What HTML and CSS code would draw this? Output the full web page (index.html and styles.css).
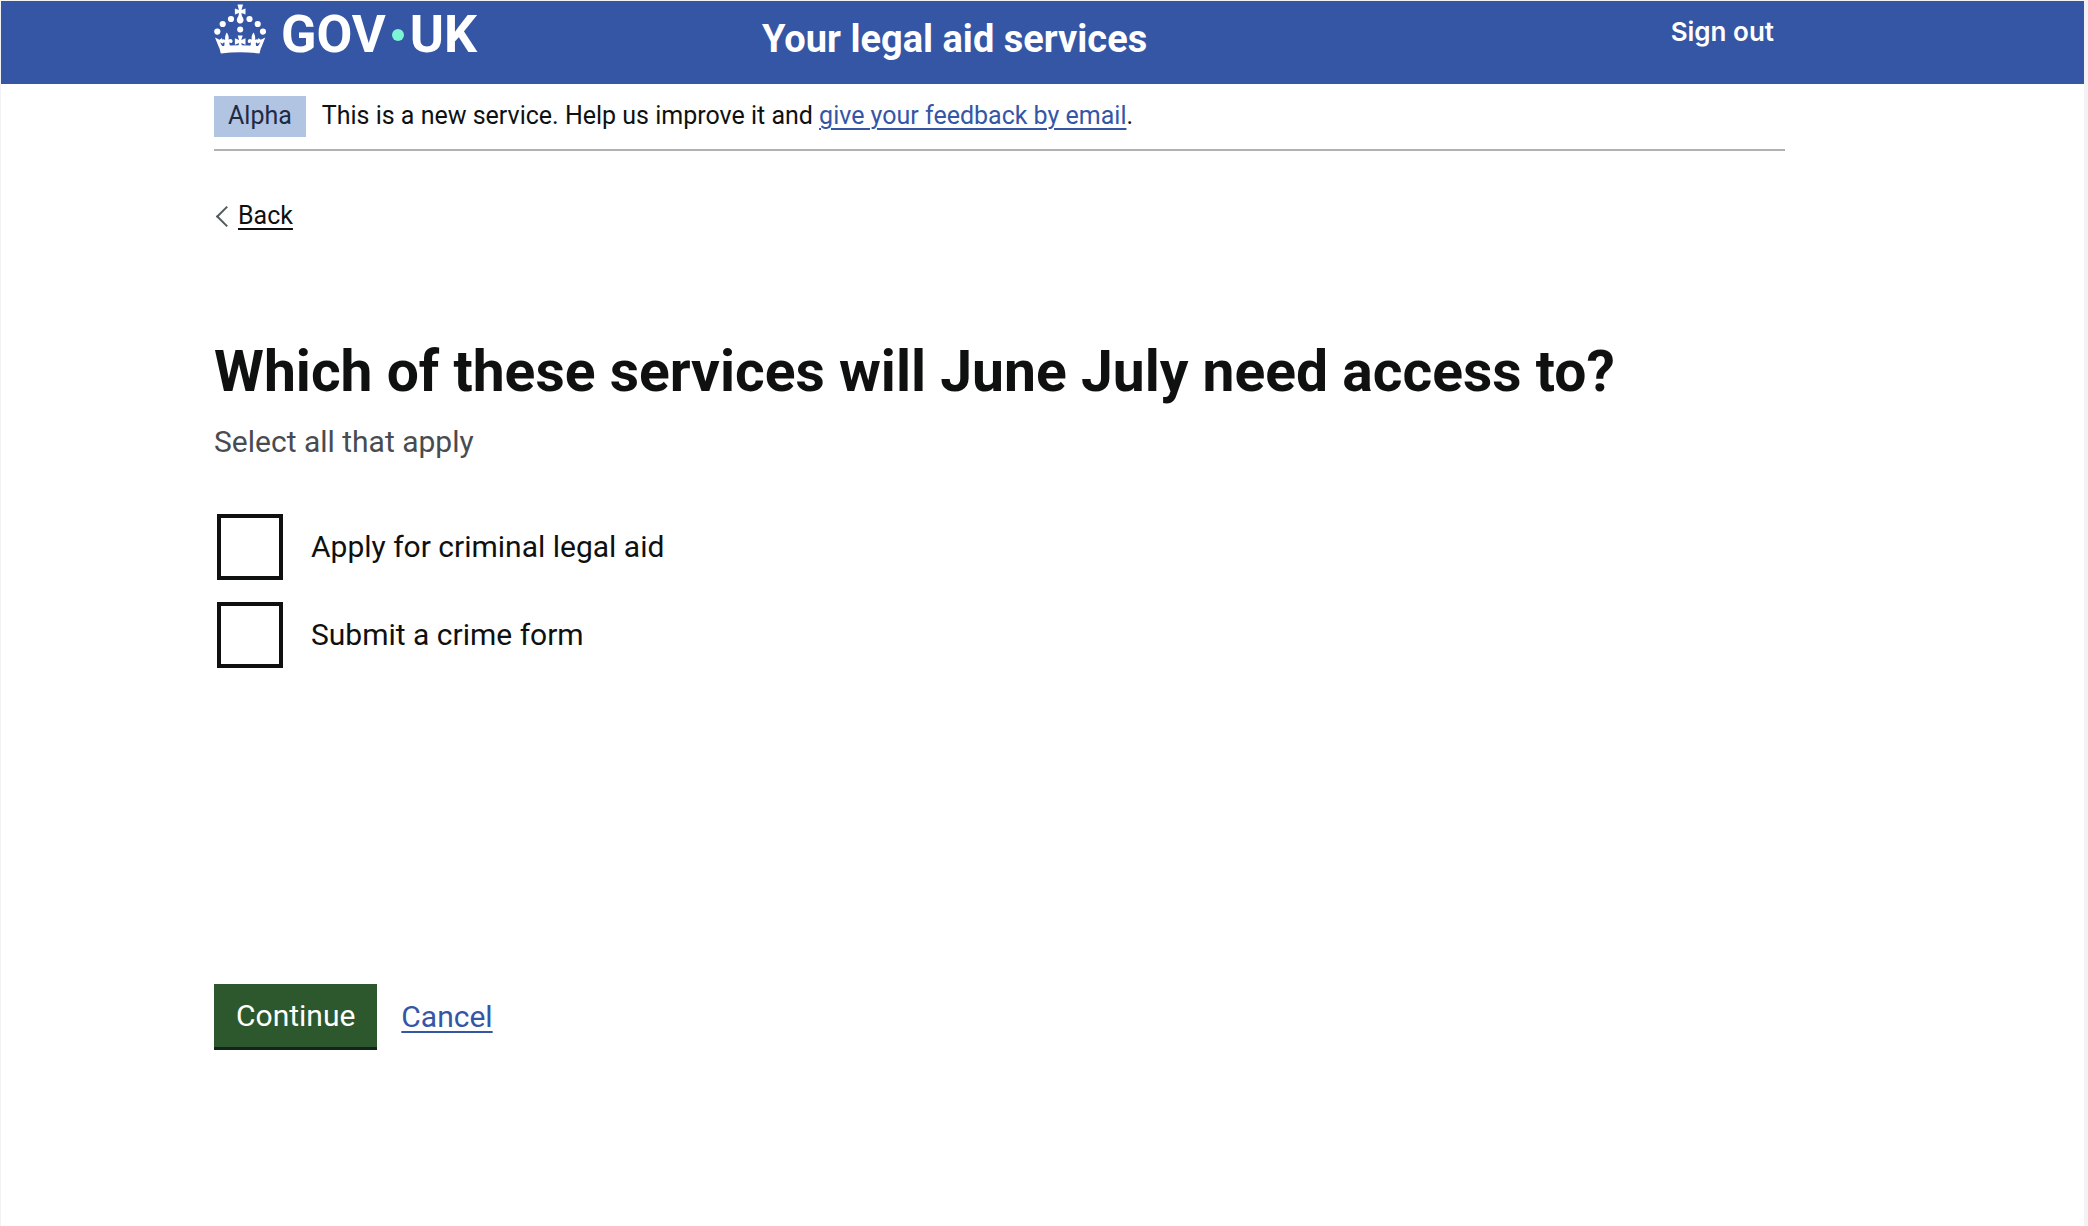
FILE: index.html
```
<!DOCTYPE html>
<html lang="en">
<head>
	<meta charset="utf-8">
	<meta name="viewport" content="width=device-width, initial-scale=1">
	<title>Your legal aid services</title>
	<link rel="stylesheet" href="styles.css">
</head>
<body>
<header class="header">
	<div class="container header-inner">
		<a href="#" class="logo" aria-label="GOV.UK">
			<svg class="crown" viewBox="0 0 52 52" width="52" height="52" aria-hidden="true">
				<g fill="#fff">
					<!-- top cross -->
					<path d="M23.500 1.500h5.500l-1.500 5.500 4-1.500v6l-4-1.500c0 2.500.8 3.500 1.600 5 1.200 2.800-.2 5.500-2.900 5.500s-4.100-2.700-2.900-5.500c.8-1.500 1.600-2.500 1.600-5l-4 1.500v-6l4 1.500z"/>
					<!-- pearls -->
					<circle cx="26.200" cy="26.500" r="3"/>
					<circle cx="17" cy="16" r="3.100"/>
					<circle cx="35.500" cy="16" r="3.100"/>
					<circle cx="8.700" cy="21" r="3.100"/>
					<circle cx="43.700" cy="21" r="3.100"/>
					<circle cx="3.300" cy="28.600" r="3.100"/>
					<circle cx="49" cy="28.600" r="3.100"/>
					<!-- base -->
					<path d="M5 43.500c14-1.700 28-1.700 42.300 0l-1.800 7c-13-1.600-25.600-1.600-38.700 0z"/>
					<!-- outer points -->
					<path d="M1 34.500l4.500 2.200 2.500-1.700.8 6-2.300-1.800c0 2 1.500 3.800 3.500 4.800l-5 .5zM51.300 34.500l-4.500 2.200-2.500-1.700-.8 6 2.300-1.800c0 2-1.500 3.800-3.500 4.800l5 .5z"/>
					<!-- fleurs-de-lis -->
					<path d="M12.800 29.500c1.500 2 2.300 4.200 1.700 7.300 1.300-1.500 4.500-.8 4 1.900-.4 1.500-2.300 1.600-3 .6-.3 2.200.5 3.700 1.500 5h-7.500c.9-1.300 1.300-2.800.8-5-1 1.200-3 .8-3.100-.8-.2-2.400 2.700-3 4-1.500-.4-3.100.2-5.400 1.600-7.500zM39.500 29.500c-1.500 2-2.300 4.200-1.700 7.300-1.300-1.500-4.500-.8-4 1.900.4 1.500 2.300 1.600 3 .6.3 2.200-.5 3.700-1.500 5h7.500c-.9-1.300-1.300-2.800-.8-5 1 1.200 3 .8 3.100-.8.2-2.400-2.700-3-4-1.500.4-3.100-.2-5.400-1.600-7.500z"/>
					<!-- middle cross -->
					<path d="M23.700 32.500h5l-1.400 4.600 4.200-1.800v6.400l-4.200-1.800c.2 2 1 3.300 2.400 4h-7c1.400-.7 2.200-2 2.400-4l-4.200 1.800v-6.400l4.200 1.800z"/>
				</g>
			</svg>
			<span class="logo-text">GOV<span class="logo-dot"></span>UK</span>
		</a>
		<a href="#" class="service-name">Your legal aid services</a>
		<a href="#" class="sign-out">Sign out</a>
	</div>
</header>

<div class="container">
	<div class="phase-banner">
		<strong class="tag">Alpha</strong>
		<span>This is a new service. Help us improve it and <a href="#" class="link">give your feedback by email</a>.</span>
	</div>

	<a href="#" class="back-link">Back</a>

	<main>
		<form>
			<fieldset aria-describedby="services-hint">
				<legend><h1>Which of these services will June July need access to?</h1></legend>
				<p class="hint" id="services-hint">Select all that apply</p>
				<div class="checkboxes">
					<div class="checkbox-item">
						<input type="checkbox" id="apply-crime" name="services" value="apply">
						<label for="apply-crime">Apply for criminal legal aid</label>
					</div>
					<div class="checkbox-item">
						<input type="checkbox" id="submit-crime" name="services" value="submit">
						<label for="submit-crime">Submit a crime form</label>
					</div>
				</div>
			</fieldset>
			<div class="button-group">
				<button type="submit" class="button">Continue</button>
				<a href="#" class="link">Cancel</a>
			</div>
		</form>
	</main>
</div>
</body>
</html>
```
FILE: styles.css
```
* {
	box-sizing: border-box;
}

body {
	margin: 0;
	min-height: 100vh;
	border: 1px solid #f3f3f3;
	border-right-width: 4px;
	border-bottom: 0;
	background: #fff;
	color: #0f1111;
	font-family: Roboto, "Liberation Sans", sans-serif;
	font-size: 25px;
	line-height: 32px;
}

.container {
	padding: 0 299px 0 213px;
}

.header {
	background: #3556a5;
}

.header-inner {
	display: grid;
	grid-template-columns: 548px 1fr auto;
	align-items: start;
	height: 83px;
	padding-right: 310px;
}

.header a {
	color: #fff;
	text-decoration: none;
}

.logo {
	display: flex;
}

.crown {
	margin-top: 2px;
}

.logo-text {
	display: flex;
	align-items: center;
	margin: 4px 0 0 15px;
	font-size: 52px;
	font-weight: 700;
	line-height: 60px;
}

.logo-dot {
	width: 12px;
	height: 12px;
	margin: 0 6px;
	border-radius: 50%;
	background: #7cf5d5;
}

.service-name {
	padding-top: 14px;
	font-size: 38px;
	font-weight: 700;
	line-height: 48px;
}

.sign-out {
	padding-top: 15px;
	font-family: Inter, "Liberation Sans", sans-serif;
	font-size: 26px;
	font-weight: 600;
}

.link {
	color: #3556a5;
	text-decoration-thickness: 2px;
	text-underline-offset: 4px;
}

.phase-banner {
	display: flex;
	align-items: flex-start;
	gap: 16px;
	padding: 12px 0;
	border-bottom: 2px solid #b1b1b1;
}

.tag {
	padding: 4px 14px 5px;
	background: #b1c4e2;
	color: #1f2a44;
	font-weight: 400;
}

.phase-banner span {
	padding-top: 4px;
}

.back-link {
	display: inline-flex;
	align-items: center;
	gap: 4px;
	margin-top: 49px;
	color: #0f1111;
	text-decoration-thickness: 2px;
	text-underline-offset: 4px;
}

.back-link::before {
	content: "";
	width: 13px;
	height: 13px;
	margin-left: 5px;
	border: solid #505a5f;
	border-width: 0 0 2px 2px;
	transform: rotate(45deg);
}

main {
	padding-top: 108px;
	font-size: 30px;
	line-height: 40px;
}

fieldset {
	min-width: 0;
	margin: 0;
	padding: 0;
	border: 0;
}

legend {
	padding: 0;
}

h1 {
	margin: 0;
	font-size: 57px;
	font-weight: 700;
	line-height: 64px;
}

.hint {
	margin: 18px 0 0;
	color: #484c50;
}

.checkboxes {
	display: grid;
	gap: 22px;
	margin: 52px 0 0 3px;
}

.checkbox-item {
	display: flex;
	align-items: center;
	gap: 28px;
}

.checkbox-item input {
	appearance: none;
	width: 66px;
	height: 66px;
	margin: 0;
	border: 4px solid #0f1111;
	background: #fff;
}

.checkbox-item input:checked {
	box-shadow: inset 0 0 0 12px #fff;
	background: #0f1111;
}

.button-group {
	display: flex;
	align-items: center;
	gap: 24px;
	margin-top: 316px;
}

.button {
	height: 66px;
	padding: 0 22px;
	border: 0;
	border-bottom: 3px solid #12251a;
	background: #2d582e;
	color: #fff;
	font: inherit;
	cursor: pointer;
}
```
